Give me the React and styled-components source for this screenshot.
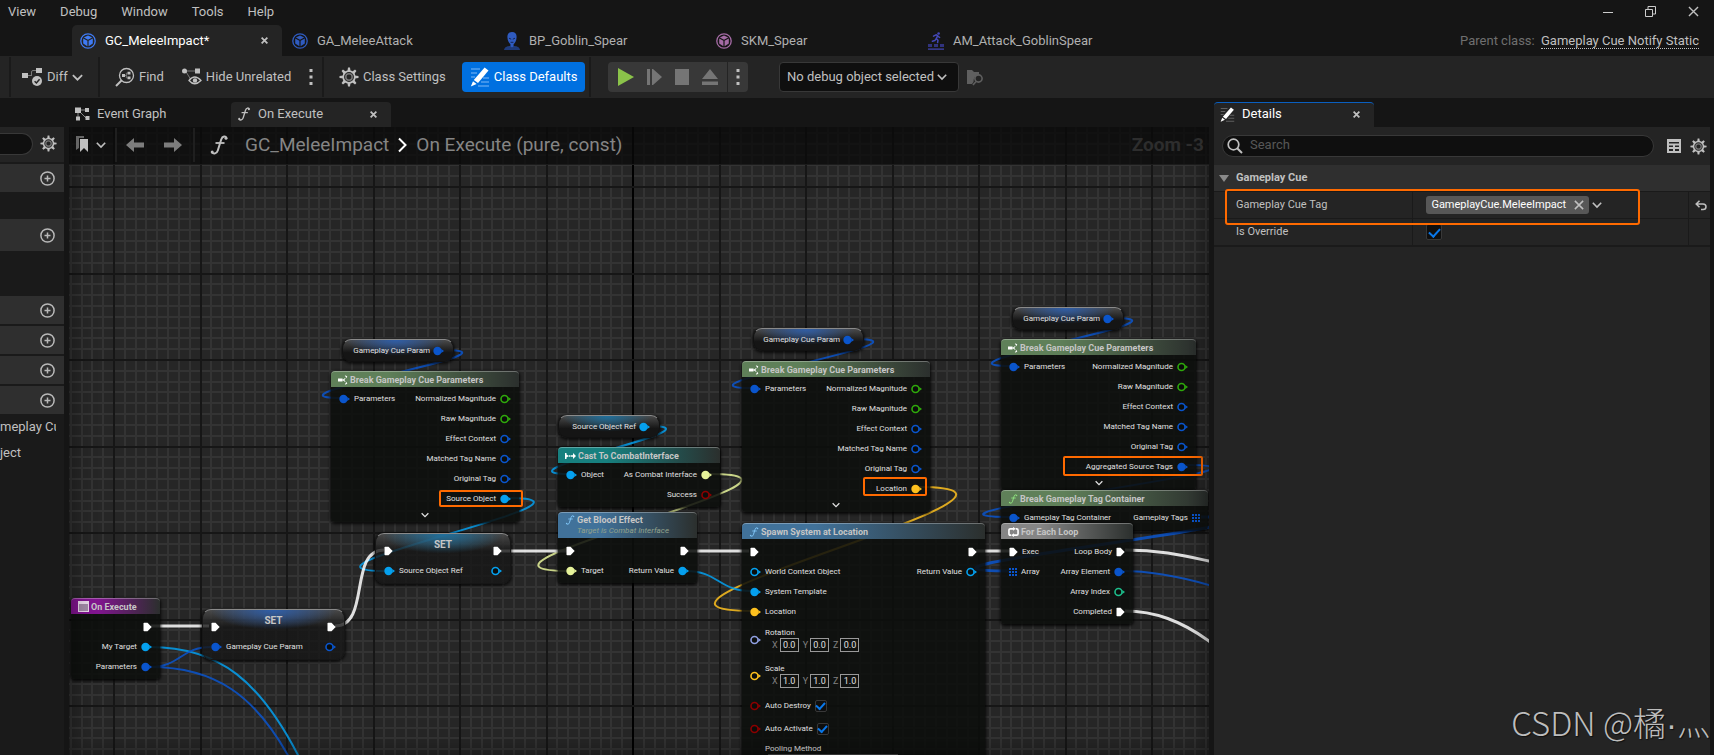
import React from "react";
import styled, { createGlobalStyle } from "styled-components";

const BLUE = "#0a55cc";
const CYAN = "#05a0ee";
const GREEN = "#2fa80c";
const LIME = "#e6f39a";
const RED = "#8c0000";
const GOLD = "#fdc01e";
const TEAL = "#1dbd8b";
const LILAC = "#8f9fe0";

/* ---------- icons ---------- */

const CubeIcon = ({ color }) => (
  <svg width="16" height="16" viewBox="0 0 16 16">
    <circle cx="8" cy="8" r="7.2" fill="none" stroke={color} strokeWidth="1.3" />
    <path d="M8 2.6 12.2 4.6 8 6.8 3.8 4.6z" fill={color} />
    <path d="M3.2 5.5 7.4 7.7V13.2L3.2 10.6zM12.8 5.5 8.6 7.7V13.2L12.8 10.6z" fill={color} />
  </svg>
);

const PawnIcon = () => (
  <svg width="16" height="18" viewBox="0 0 16 18">
    <path d="M0 18c.5-3 3-3.6 5-4h6c2 .4 4.500 1 5 4z" fill="#1f3a78" />
    <path d="M8 0c3.200 0 4.800 2.200 4.600 5.200-.1 3.500-1.800 6-3 7v2L8 15.500 6.400 14.200v-2c-1.200-1-2.900-3.500-3-7C3.200 2.200 4.800 0 8 0z" fill="#2f5bc0" />
    <path d="M5 6.200 7.200 7.200M11 6.200 8.800 7.200M6.600 10.300H9.400" stroke="#16264f" strokeWidth="1" />
  </svg>
);

const MontageIcon = () => (
  <svg width="16" height="18" viewBox="0 0 16 18">
    <g fill="none" stroke="#4448b8" strokeWidth="1.500" strokeLinecap="round" strokeLinejoin="round">
      <path d="M5.500 4.200 8 2.800 9.800 3.600 8.200 6.600 10 8.200 9.600 10.600M8.200 6.600 6.800 8.600 4.400 9.200M9.600 4.200 11.600 5.400" />
    </g>
    <circle cx="10.600" cy="1.500" r="1.300" fill="#4448b8" />
    <path d="M0 12h4v3H0zM6 12h4v3H6zM12 12h4v3h-4z" fill="#31337e" />
    <path d="M0 16.500h16v1.200H0z" fill="#4448b8" />
  </svg>
);

const DiffIcon = () => (
  <svg width="21" height="20" viewBox="0 0 21 20">
    <path d="M6 8.500h4M9.500 8.500V5q0-1.500 1.500-1.500h3" fill="none" stroke="#777" />
    <path d="M0 6h6v5H0zM14 1h6v5h-6z" fill="#c0c0c0" />
    <circle cx="15" cy="14" r="5" fill="#c0c0c0" />
    <path d="m12.600 14.200 1.800 1.800 3.200-3.800" fill="none" stroke="#242424" strokeWidth="1.500" />
  </svg>
);

const FindIcon = () => (
  <svg width="20" height="20" viewBox="0 0 20 20">
    <circle cx="11.500" cy="8.500" r="7" fill="none" stroke="#c0c0c0" strokeWidth="1.300" />
    <path d="M6.500 13.500 1 19" stroke="#c0c0c0" strokeWidth="2" />
    <path d="M7 7h3v3H7zM12.500 4.800h3v2.700h-3zM12.500 9.500h3v2.700h-3z" fill="#c0c0c0" />
    <path d="M10 8.500h1.300M12.500 6.200h-1.200v4.600h1.200" fill="none" stroke="#888" strokeWidth=".8" />
  </svg>
);

const HideIcon = () => (
  <svg width="20" height="18" viewBox="0 0 20 18">
    <path d="M3 3h12M3.500 3l5 8" stroke="#777" />
    <circle cx="2.500" cy="3" r="2.500" fill="#c0c0c0" />
    <path d="M13 .5h5v5h-5z" fill="#c0c0c0" />
    <path d="M7 12.500q5.500-7 12 0-6.500 6.500-12 0z" fill="none" stroke="#c0c0c0" strokeWidth="1.300" />
    <circle cx="13" cy="12.500" r="2.200" fill="#c0c0c0" />
  </svg>
);

const GearIcon = ({ size }) => (
  <svg width={size} height={size} viewBox="0 0 20 20">
    {[0, 45, 90, 135, 180, 225, 270, 315].map((a) => (
      <path key={a} d="M8.400 4.500 9 .5h2l.6 4z" fill="#c0c0c0" transform={`rotate(${a} 10 10)`} />
    ))}
    <circle cx="10" cy="10" r="5.800" fill="none" stroke="#c0c0c0" strokeWidth="1.700" />
    <circle cx="10" cy="10" r="3.200" fill="none" stroke="#777" strokeWidth="1.500" />
  </svg>
);

const PencilIcon = ({ size, line }) => (
  <svg width={size} height={size} viewBox="0 0 20 20">
    <path d="M1 2h9M1 6h6M1 10h4M13 11h6M11 15h8M8 19h11" stroke={line} strokeWidth="1.200" />
    <path d="M14.600 .5 18.500 3.500 8 16 3.800 13z" fill="#fff" />
    <path d="M3 14.200 6.600 17 .8 19.500z" fill="#fff" />
  </svg>
);

const ChevronDown = ({ size = 10, color = "#c0c0c0" }) => (
  <svg width={size} height={size} viewBox="0 0 10 10">
    <path d="M.8 2.800 5 7 9.200 2.800" fill="none" stroke={color} strokeWidth="1.600" />
  </svg>
);

const CloseIcon = ({ size = 7, width = 2 }) => (
  <svg width={size} height={size} viewBox="0 0 8 8">
    <path d="M.7 .7 7.300 7.300M7.300 .7 .7 7.300" stroke="#c0c0c0" strokeWidth={width} />
  </svg>
);

const Dots = () => (
  <svg width="4" height="18" viewBox="0 0 4 18">
    <path d="M.5 1h3v3h-3zM.5 7.500h3v3h-3zM.5 14h3v3h-3z" fill="#c0c0c0" />
  </svg>
);

const FunctionIcon = ({ size, color = "#c0c0c0" }) => (
  <svg width={size} height={size} viewBox="0 0 18 20">
    <path d="M16.500 3.200C15.800 .8 12.400 .8 11.200 4.500L7.800 15.500C6.800 18.600 3.500 19.500 1.800 17.200" fill="none" stroke={color} strokeWidth="2" />
    <path d="M5.500 8H14.500" stroke={color} strokeWidth="1.800" />
    <circle cx="16" cy="3.200" r="1.500" fill={color} />
    <circle cx="2.200" cy="17" r="1.500" fill={color} />
  </svg>
);

const GraphIcon = () => (
  <svg width="15" height="14" viewBox="0 0 15 14">
    <path d="M4 3h7M3 4v8M4 4l7 7" stroke="#888" />
    <path d="M0 .5h6V6H0zM1 9.500h4v4H1zM10 1h4v4h-4zM10.500 9h4v4h-4z" fill="#c0c0c0" />
  </svg>
);

const BookmarkIcon = () => (
  <svg width="12" height="17" viewBox="0 0 12 17">
    <path d="M0 0h8v2H3v10l-3 2z" fill="#666" />
    <path d="M4 3h8v13l-4-4-4 4z" fill="#c0c0c0" />
  </svg>
);

const ArrowIcon = ({ flip }) => (
  <svg width="18" height="14" viewBox="0 0 18 14">
    <path d="M8 0v4.500h10v5H8V14L0 7z" fill="#7d7d7d" transform={flip ? "rotate(180 9 7)" : undefined} />
  </svg>
);

const PlusIcon = () => (
  <svg width="15" height="15" viewBox="0 0 15 15">
    <circle cx="7.500" cy="7.500" r="6.600" fill="none" stroke="#b8b8b8" strokeWidth="1.500" />
    <path d="M7.500 4.500v6M4.500 7.500h6" stroke="#b8b8b8" strokeWidth="1.500" />
  </svg>
);

const SearchIcon = () => (
  <svg width="16" height="16" viewBox="0 0 16 16">
    <circle cx="6.500" cy="6.500" r="5.300" fill="none" stroke="#c0c0c0" strokeWidth="1.700" />
    <path d="M10.200 10.200 15 15" stroke="#c0c0c0" strokeWidth="2" />
  </svg>
);

const TableIcon = () => (
  <svg width="14" height="14" viewBox="0 0 14 14">
    <path d="M0 0h14v14H0z" fill="#c0c0c0" />
    <path d="M2 3h10v1.500H2zM2 6.500h4v1.500H2zM8 6.500h4v1.500H8zM2 10h4v2H2zM8 10h4v2H8z" fill="#242424" />
  </svg>
);

const ResetIcon = () => (
  <svg width="12" height="11" viewBox="0 0 12 11">
    <path d="M4.500 .8 1.200 4 4.500 7.200M1.500 4h6.500q3 0 3 2.800T8 9.600H6" fill="none" stroke="#c0c0c0" strokeWidth="1.500" />
  </svg>
);

const BrowseIcon = () => (
  <svg width="17" height="17" viewBox="0 0 17 17">
    <path d="M0 1h5l2 2h5v3Q6 7 6.500 13L5 15H0z" fill="#5f5f5f" />
    <circle cx="11.500" cy="9.500" r="3.600" fill="none" stroke="#5f5f5f" strokeWidth="1.600" />
    <path d="M9 12.500 6 16" stroke="#5f5f5f" strokeWidth="1.600" />
  </svg>
);

const BreakIcon = () => (
  <svg width="10" height="10" viewBox="0 0 10 10">
    <path d="M0 3.500h4.500v3H0z" fill="#fff" />
    <path d="M4.500 5Q7 5 7 3.200M4.500 5Q7 5 7 6.800" fill="none" stroke="#fff" />
    <path d="M6.800 .3l2.500 1-1 2zM6.800 9.700l2.500-1-1-2z" fill="#fff" />
  </svg>
);

const CastIcon = () => (
  <svg width="11" height="8" viewBox="0 0 11 8">
    <path d="M0 1h1.500v6H0zM1.500 2.500 4 4 1.500 5.500zM4 3.300h1.500v1.400H4zM6 3.300h2V1l3 3-3 3V4.700H6z" fill="#fff" />
  </svg>
);

const LoopIcon = () => (
  <svg width="11" height="10" viewBox="0 0 12 11">
    <path d="M3.500 9H2.500Q1 9 1 7.500V3.500Q1 2 2.500 2h3M8.500 2h1Q11 2 11 3.500v4Q11 9 9.500 9h-3" fill="none" stroke="#fff" strokeWidth="1.800" />
    <path d="M5.500 0 8.500 2 5.500 4.200zM6.500 6.800 3.500 9l3 2z" fill="#fff" />
  </svg>
);

const EventIcon = () => (
  <svg width="11" height="11" viewBox="0 0 11 11">
    <path d="M0 0h11v11H0z" fill="#e8d8ea" />
    <path d="M1 3h9v7H1z" fill="#a089a6" />
  </svg>
);

const DataPin = ({ color, hollow }) => (
  <PinSvg width="11" height="10" viewBox="0 0 11 10">
    <circle cx="4.500" cy="5" r={hollow ? 3.500 : 4.200} fill={hollow ? "#0b0d0b" : color} stroke={color} strokeWidth={hollow ? 1.600 : 0} />
    <path d="M8.300 3 11 5 8.300 7z" fill={color} />
  </PinSvg>
);

const ExecPin = () => (
  <PinSvg width="9" height="10" viewBox="0 0 9 10">
    <path d="M1.200 .8H4.500L8.700 5 4.500 9.200H1.200Q.5 9.200 .5 8.500V1.500Q.5 .8 1.200 .8z" fill="#fff" />
  </PinSvg>
);

const ArrayPin = () => (
  <PinSvg width="8" height="8" viewBox="0 0 8 8">
    {[0, 3, 6].map((x) => [0, 3, 6].map((y) => <path key={`${x}-${y}`} d={`M${x} ${y}h2v2h-2z`} fill={BLUE} />))}
  </PinSvg>
);

/* ---------- graph ---------- */

// Distance between two heavy grid lines is 86.5 at this zoom, with 8 cells in it.
const STEP = 86.5;
const lines = (origin, from, to) => {
  const out = [];
  for (let k = from * 8; k <= to * 8; k++) {
    out.push({ at: Math.round(origin + (k * STEP) / 8), major: k % 8 === 0 });
  }
  return out;
};
const columns = lines(563, -7, 32);
const rows = lines(59, -1, 20);

const Grid = () => (
  <Layer shapeRendering="crispEdges">
    {columns.filter((l) => !l.major).map((l) => <rect key={l.at} x={l.at} y="0" width="2" height="100%" fill="#333" />)}
    {rows.filter((l) => !l.major).map((l) => <rect key={l.at} x="0" y={l.at} width="100%" height="2" fill="#333" />)}
    {columns.filter((l) => l.major).map((l) => <rect key={l.at} x={l.at} y="0" width="2" height="100%" fill={l.at === 563 ? "#000" : "#161616"} />)}
    {rows.filter((l) => l.major).map((l) => <rect key={l.at} x="0" y={l.at} width="100%" height="2" fill="#161616" />)}
  </Layer>
);

const spline = (x1, y1, x2, y2, d) => `M${x1} ${y1}C${x1 + d} ${y1} ${x2 - d} ${y2} ${x2} ${y2}`;

const wires = [
  { d: spline(373, 223, 274, 271, 98), color: BLUE },
  { d: spline(439, 371, 317, 444, 124), color: CYAN },
  { d: spline(579, 299, 501, 347, 85), color: CYAN },
  { d: spline(641, 347, 501, 444, 150), color: LIME },
  { d: spline(849, 360, 684, 484, 180), color: GOLD },
  { d: spline(784, 212, 684, 261, 98), color: BLUE },
  { d: spline(1043, 191, 943, 239, 98), color: BLUE },
  { d: spline(1115, 338, 943, 390, 146), color: BLUE },
  { d: spline(1132, 390, 940, 444, 167), color: BLUE, w: 3 },
  { d: spline(617, 444, 682, 464, 32), color: CYAN },
  { d: "M81 520C151 520 192 555 231 632", color: CYAN },
  { d: "M81 540C146 540 186 568 221 632", color: BLUE },
  { d: spline(81, 540, 142, 520, 30), color: BLUE },
  { d: "M1053 444C1085 444 1112 450 1140 458L1240 490", color: BLUE },
  { d: "M82 499H140", color: "#fff", w: 3 },
  { d: spline(266, 499, 315, 423, 36), color: "#fff", w: 3 },
  { d: "M432 424H498", color: "#fff", w: 3 },
  { d: "M619 424H680", color: "#fff", w: 3 },
  { d: "M907 424H941", color: "#fff", w: 3 },
  { d: "M1056 423C1090 423 1112 428 1140 434L1240 460", color: "#fff", w: 3 },
  { d: "M1056 484C1086 484 1112 494 1140 514L1240 600", color: "#fff", w: 3 },
];

const Wires = () => (
  <Layer>
    {wires.map((w) => <path key={w.d} d={w.d} fill="none" stroke={w.color} strokeWidth={w.w || 2} opacity=".85" />)}
  </Layer>
);

const Pin = ({ pin }) => {
  if (pin === "exec") return <ExecPin />;
  if (pin === "array") return <ArrayPin />;
  return <DataPin color={pin[0]} hollow={pin[1]} />;
};

const PinRow = ({ left, right, exec }) => (
  <Row $exec={exec}>
    <Side>
      {left && <Pin pin={left[0]} />}
      {left && left[1]}
    </Side>
    <Side>
      {right && right[1]}
      {right && <Pin pin={right[0]} />}
    </Side>
  </Row>
);

const breakPins = [
  ["Normalized Magnitude", GREEN],
  ["Raw Magnitude", GREEN],
  ["Effect Context", BLUE],
  ["Matched Tag Name", BLUE],
  ["Original Tag", BLUE],
];

const BreakNode = ({ x, y, w, last, color }) => (
  <Node $x={x} $y={y} $w={w}>
    <Head $color="#5f8059"><BreakIcon />Break Gameplay Cue Parameters</Head>
    {breakPins.map(([name, c], i) => (
      <PinRow key={name} left={i === 0 ? [[BLUE], "Parameters"] : null} right={[[c, true], name]} />
    ))}
    <PinRow right={[[color], last]} />
    <Expand aria-label="Show more pins"><ChevronDown size={8} color="#e0e0e0" /></Expand>
  </Node>
);

const VariableNode = ({ x, y, w, name, color, glow }) => (
  <Variable $x={x} $y={y} $w={w} $glow={glow}>
    {name}
    <DataPin color={color} />
  </Variable>
);

const SetNode = ({ x, y, w, name, color, glow }) => (
  <SetBox $x={x} $y={y} $w={w} $glow={glow}>
    <SetTop><ExecPin /><strong>SET</strong><ExecPin /></SetTop>
    <PinRow left={[[color], name]} right={[[color, true], ""]} />
  </SetBox>
);

const VectorPin = ({ name, color, value }) => (
  <VectorRow>
    <DataPin color={color} hollow />
    <div>
      <p>{name}</p>
      <Fields>
        {["X", "Y", "Z"].map((axis) => (
          <label key={axis}>{axis}<input defaultValue={value} /></label>
        ))}
      </Fields>
    </div>
  </VectorRow>
);

const Graph = () => (
  <Canvas>
    <Grid />
    <Wires />

    <VariableNode x={273} y={212} w={112} name="Gameplay Cue Param" color={BLUE} glow="#2f5ea8" />
    <BreakNode x={262} y={244} w={188} last="Source Object" color={CYAN} />

    <VariableNode x={489} y={288} w={102} name="Source Object Ref" color={CYAN} glow="#1f6f9c" />
    <Node $x={489} $y={320} $w={162}>
      <Head $color="#17807f"><CastIcon />Cast To CombatInterface</Head>
      <PinRow left={[[CYAN], "Object"]} right={[[LIME], "As Combat Interface"]} />
      <PinRow right={[[RED, true], "Success"]} />
    </Node>
    <Node $x={489} $y={385} $w={139}>
      <Head $color="#41729a" $tall>
        <FunctionIcon size={10} color="#7fc4f5" />
        <div>
          Get Blood Effect
          <em>Target is Combat Interface</em>
        </div>
      </Head>
      <PinRow exec left={["exec", ""]} right={["exec", ""]} />
      <PinRow left={[[LIME], "Target"]} right={[[CYAN], "Return Value"]} />
    </Node>

    <SetNode x={306} y={406} w={136} name="Source Object Ref" color={CYAN} glow="#1f6f9c" />
    <SetNode x={133} y={482} w={143} name="Gameplay Cue Param" color={BLUE} glow="#2f5ea8" />

    <Node $x={2} $y={471} $w={89}>
      <Head $color="#81158f"><EventIcon />On Execute</Head>
      <PinRow exec right={["exec", ""]} />
      <PinRow right={[[CYAN], "My Target"]} />
      <PinRow right={[[BLUE], "Parameters"]} />
    </Node>

    <VariableNode x={684} y={201} w={111} name="Gameplay Cue Param" color={BLUE} glow="#2f5ea8" />
    <BreakNode x={673} y={234} w={188} last="Location" color={GOLD} />
    <Node $x={673} $y={396} $w={243}>
      <Head $color="#41729a"><FunctionIcon size={10} color="#7fc4f5" />Spawn System at Location</Head>
      <PinRow exec left={["exec", ""]} right={["exec", ""]} />
      <PinRow left={[[CYAN, true], "World Context Object"]} right={[[CYAN, true], "Return Value"]} />
      <PinRow left={[[CYAN], "System Template"]} />
      <PinRow left={[[GOLD], "Location"]} />
      <VectorPin name="Rotation" color={LILAC} value="0.0" />
      <VectorPin name="Scale" color={GOLD} value="1.0" />
      <CheckRow><DataPin color={RED} hollow />Auto Destroy<Checkbox $small defaultChecked /></CheckRow>
      <CheckRow><DataPin color={RED} hollow />Auto Activate<Checkbox $small defaultChecked /></CheckRow>
      <Pooling>
        <label htmlFor="pooling">Pooling Method</label>
        <select id="pooling" defaultValue="None"><option>None</option></select>
      </Pooling>
    </Node>

    <VariableNode x={943} y={180} w={112} name="Gameplay Cue Param" color={BLUE} glow="#2f5ea8" />
    <BreakNode x={932} y={212} w={195} last="Aggregated Source Tags" color={BLUE} />
    <Node $x={932} $y={363} $w={207}>
      <Head $color="#5f8059"><FunctionIcon size={10} color="#8ee07f" />Break Gameplay Tag Container</Head>
      <PinRow left={[[BLUE], "Gameplay Tag Container"]} right={["array", "Gameplay Tags"]} />
    </Node>
    <Node $x={932} $y={396} $w={132}>
      <Head $color="#858585"><LoopIcon />For Each Loop</Head>
      <PinRow exec left={["exec", "Exec"]} right={["exec", "Loop Body"]} />
      <PinRow left={["array", "Array"]} right={[[BLUE], "Array Element"]} />
      <PinRow right={[[TEAL, true], "Array Index"]} />
      <PinRow right={["exec", "Completed"]} />
    </Node>

    <Mark $x={370} $y={363} $w={84} $h={17} />
    <Mark $x={794} $y={350} $w={64} $h={19} />
    <Mark $x={994} $y={329} $w={140} $h={20} />
    <Vignette />

    <Crumbs>
      <IconButton aria-label="Bookmarks"><BookmarkIcon /><ChevronDown size={10} /></IconButton>
      <Nav>
        <IconButton aria-label="Back"><ArrowIcon /></IconButton>
        <IconButton aria-label="Forward"><ArrowIcon flip /></IconButton>
      </Nav>
      <FunctionIcon size={20} />
      <Path>
        <a href="#class">GC_MeleeImpact</a>
        <svg width="9" height="16" viewBox="0 0 9 16"><path d="M1 1.500 7.500 8 1 14.500" fill="none" stroke="#fff" strokeWidth="2" /></svg>
        <span>On Execute (pure, const)</span>
      </Path>
      <Zoom>Zoom -3</Zoom>
    </Crumbs>
  </Canvas>
);

/* ---------- page ---------- */

const docs = [
  { name: "GC_MeleeImpact*", icon: <CubeIcon color="#3f7bf5" />, active: true },
  { name: "GA_MeleeAttack", icon: <CubeIcon color="#2f5bc0" /> },
  { name: "BP_Goblin_Spear", icon: <PawnIcon /> },
  { name: "SKM_Spear", icon: <CubeIcon color="#a56ba5" /> },
  { name: "AM_Attack_GoblinSpear", icon: <MontageIcon /> },
];

const Details = () => (
  <DetailsPanel>
    <PanelTabs>
      <PanelTab $active $focus>
        <PencilIcon size={15} line="#666" />
        <span>Details</span>
        <TabClose aria-label="Close Details"><CloseIcon /></TabClose>
      </PanelTab>
    </PanelTabs>
    <DetailsBody>
      <SearchBar>
        <SearchField>
          <SearchIcon />
          <input aria-label="Search details" placeholder="Search" />
        </SearchField>
        <IconButton aria-label="Table view"><TableIcon /></IconButton>
        <IconButton aria-label="Settings"><GearIcon size={17} /></IconButton>
      </SearchBar>
      <Category>
        <svg width="10" height="7" viewBox="0 0 10 7"><path d="M0 0h10L5 7z" fill="#8a8a8a" /></svg>
        Gameplay Cue
      </Category>
      <Property>
        <div>Gameplay Cue Tag</div>
        <div>
          <Chip>GameplayCue.MeleeImpact<IconButton aria-label="Clear tag"><CloseIcon size={10} width={1.200} /></IconButton></Chip>
          <IconButton aria-label="Choose tag"><ChevronDown /></IconButton>
        </div>
        <div><IconButton aria-label="Reset to default"><ResetIcon /></IconButton></div>
        <PropertyMark />
      </Property>
      <Property>
        <label htmlFor="override">Is Override</label>
        <div><Checkbox id="override" defaultChecked /></div>
        <div />
      </Property>
      <Watermark>CSDN @橘<span>·</span>灬</Watermark>
    </DetailsBody>
  </DetailsPanel>
);

const App = () => {
  return (
    <Container>
      <GlobalStyle />
      <MenuBar>
        {["View", "Debug", "Window", "Tools", "Help"].map((m) => <button key={m}>{m}</button>)}
        <WindowButtons>
          <IconButton aria-label="Minimize"><svg width="10" height="11" viewBox="0 0 10 11"><path d="M0 6.500h10" stroke="#ccc" /></svg></IconButton>
          <IconButton aria-label="Restore">
            <svg width="11" height="11" viewBox="0 0 11 11"><path d="M.5 3.500h7v7h-7zM3 3V.5h7.500V8H8" fill="none" stroke="#ccc" /></svg>
          </IconButton>
          <IconButton aria-label="Close"><CloseIcon size={11} width={1} /></IconButton>
        </WindowButtons>
      </MenuBar>
      <DocTabs>
        {docs.map((d) => (
          <DocTab key={d.name} $active={d.active}>
            {d.icon}
            <span>{d.name}</span>
            {d.active && <TabClose aria-label="Close tab"><CloseIcon /></TabClose>}
          </DocTab>
        ))}
        <Parent>Parent class: <a href="#parent">Gameplay Cue Notify Static</a></Parent>
      </DocTabs>

      <Toolbar>
        <Group $w={89} $pad={11} $gap={16}><Tool><DiffIcon />Diff<ChevronDown size={11} /></Tool></Group>
        <Group $w={224} $pad={15} $gap={18}>
          <Tool><FindIcon />Find</Tool>
          <Tool><HideIcon />Hide Unrelated</Tool>
          <IconButton aria-label="More"><Dots /></IconButton>
        </Group>
        <Group $w={267} $pad={15} $gap={16}>
          <Tool><GearIcon size={20} />Class Settings</Tool>
          <Tool $primary><PencilIcon size={20} line="#7fb8f5" />Class Defaults</Tool>
        </Group>
        <Group $w={173} $pad={17} $gap={16}>
          <Play>
            <IconButton aria-label="Play"><svg width="16" height="18"><path d="M0 0 16 9 0 18z" fill="#8bc34a" /></svg></IconButton>
            <IconButton aria-label="Step"><svg width="15" height="16"><path d="M0 0h3v16H0zM5 0h1v16H5zM6 0l9 8-9 8z" fill="#757575" /></svg></IconButton>
            <IconButton aria-label="Stop"><svg width="14" height="16"><path d="M0 0h14v16H0z" fill="#757575" /></svg></IconButton>
            <IconButton aria-label="Eject"><svg width="16" height="16"><path d="M8 0 16 10H0zM0 12.500h16V16H0z" fill="#757575" /></svg></IconButton>
            <IconButton aria-label="Play options"><Dots /></IconButton>
          </Play>
        </Group>
        <DebugSelect>
          <select aria-label="Debug object"><option>No debug object selected</option></select>
          <ChevronDown />
        </DebugSelect>
        <IconButton aria-label="Browse"><BrowseIcon /></IconButton>
      </Toolbar>

      <Main>
        <Sidebar>
          <SideSearch>
            <input aria-label="Search members" />
            <IconButton aria-label="Settings"><GearIcon size={17} /></IconButton>
          </SideSearch>
          {[[28, 27], [32, 45], [28, 2], [28, 2], [28, 2], [28, 0]].map(([h, after], i) => (
            <Section key={i} $h={h} $after={after}><IconButton aria-label="Add"><PlusIcon /></IconButton></Section>
          ))}
          <Member>meplay Cu</Member>
          <Member>ject</Member>
        </Sidebar>
        <GraphPanel>
          <PanelTabs>
            <PanelTab><GraphIcon /><span>Event Graph</span></PanelTab>
            <PanelTab $active>
              <FunctionIcon size={14} />
              <span>On Execute</span>
              <TabClose aria-label="Close On Execute"><CloseIcon /></TabClose>
            </PanelTab>
          </PanelTabs>
          <Graph />
        </GraphPanel>
        <Details />
      </Main>
    </Container>
  );
};

export default App;

const GlobalStyle = createGlobalStyle`
  * {
    box-sizing: border-box;
  }
  body {
    margin: 0;
    background-color: #151515;
  }
  button, input, select {
    font: inherit;
    color: inherit;
  }
  button {
    cursor: pointer;
  }
  svg {
    flex-shrink: 0;
  }
`;

const Container = styled.div`
  height: 100vh;
  display: flex;
  flex-direction: column;
  overflow: hidden;
  background-color: #151515;
  color: #c0c0c0;
  font-family: Roboto, "Liberation Sans", sans-serif;
  font-size: 13px;
  line-height: 16px;
`;

const IconButton = styled.button`
  display: flex;
  align-items: center;
  padding: 0;
  border: none;
  background: none;
`;

const MenuBar = styled.div`
  display: flex;
  align-items: center;
  gap: 24px;
  height: 25px;
  padding: 0 15px 2px 8px;
  > button {
    padding: 0;
    border: none;
    background: none;
  }
`;

const WindowButtons = styled.div`
  display: flex;
  gap: 32px;
  margin-left: auto;
`;

const DocTabs = styled.div`
  display: flex;
  height: 31px;
  padding: 0 15px 0 72px;
`;

const DocTab = styled.div`
  display: flex;
  align-items: center;
  gap: 9px;
  width: 210px;
  margin-right: 2px;
  padding: 0 14px 0 8px;
  border-radius: 5px 5px 0 0;
  background-color: ${(p) => (p.$active ? "#242424" : "transparent")};
  color: ${(p) => (p.$active ? "#fff" : "#b0b0b0")};
`;

const TabClose = styled(IconButton)`
  margin-left: auto;
`;

const Parent = styled.div`
  margin: auto 0 auto auto;
  color: #6f6f6f;
  a {
    margin-left: 3px;
    color: #c0c0c0;
    text-decoration: none;
    border-bottom: 1px dotted #c0c0c0;
  }
`;

const Toolbar = styled.div`
  display: flex;
  align-items: center;
  height: 42px;
  padding-left: 9px;
  background-color: #242424;
`;

const Group = styled.div`
  display: flex;
  align-items: center;
  gap: ${(p) => p.$gap}px;
  width: ${(p) => p.$w}px;
  height: 40px;
  padding-left: ${(p) => p.$pad}px;
  border-left: 2px solid #1a1a1a;
`;

const Tool = styled.button`
  display: flex;
  align-items: center;
  gap: 4px;
  height: 30px;
  padding: ${(p) => (p.$primary ? "0 8px" : "0")};
  border: none;
  border-radius: 4px;
  white-space: nowrap;
  color: ${(p) => (p.$primary ? "#fff" : "#c0c0c0")};
  background-color: ${(p) => (p.$primary ? "#0070e0" : "transparent")};
`;

const Play = styled.div`
  display: flex;
  align-items: center;
  gap: 13px;
  height: 30px;
  padding-left: 10px;
  border-radius: 4px;
  background-color: #383838;
  button:last-child {
    height: 30px;
    margin-left: -4px;
    padding: 0 8px;
    border-left: 1px solid #242424;
  }
`;

const DebugSelect = styled.div`
  display: flex;
  align-items: center;
  height: 30px;
  margin: 0 8px 0 17px;
  padding: 0 11px 0 7px;
  border: 1px solid #383838;
  border-radius: 4px;
  background-color: #0f0f0f;
  select {
    padding: 0 2px 0 0;
    appearance: none;
    border: none;
    background: none;
  }
`;

const Main = styled.div`
  display: flex;
  flex: 1;
  gap: 5px;
  min-height: 0;
  padding-right: 4px;
`;

const Sidebar = styled.div`
  width: 64px;
  margin-top: 29px;
  background-color: #1a1a1a;
`;

const SideSearch = styled.div`
  display: flex;
  align-items: center;
  gap: 7px;
  height: 35px;
  margin-bottom: 2px;
  padding-bottom: 2px;
  background-color: #242424;
  input {
    width: 33px;
    height: 22px;
    border: 1px solid #383838;
    border-left: none;
    border-radius: 0 11px 11px 0;
    background-color: #0f0f0f;
  }
`;

const Section = styled.div`
  display: flex;
  align-items: center;
  justify-content: flex-end;
  height: ${(p) => p.$h}px;
  margin-bottom: ${(p) => p.$after}px;
  padding-right: 9px;
  background-color: #2f2f2f;
`;

const Member = styled.div`
  width: 56px;
  overflow: hidden;
  white-space: nowrap;
  line-height: 26px;
`;

const GraphPanel = styled.div`
  display: flex;
  flex-direction: column;
  flex: 1140 1 0;
  min-width: 0;
`;

const PanelTabs = styled.div`
  display: flex;
  height: 29px;
  padding-top: 4px;
`;

const PanelTab = styled.div`
  display: flex;
  align-items: center;
  gap: 7px;
  width: 160px;
  margin-right: 2px;
  padding: 0 14px 2px 6px;
  border-radius: 4px 4px 0 0;
  border-top: 1px solid ${(p) => (p.$focus ? "#0a5fc0" : "transparent")};
  color: ${(p) => (p.$focus ? "#fff" : "#c0c0c0")};
  background-color: ${(p) => (p.$active ? "#242424" : "transparent")};
`;

const Canvas = styled.div`
  position: relative;
  flex: 1;
  overflow: hidden;
  background-color: #262626;
  color: #e0e0e0;
  font-size: 8px;
  line-height: 10px;
`;

const Layer = styled.svg`
  position: absolute;
  top: 0;
  left: 0;
  width: 100%;
  height: 100%;
`;

const Vignette = styled.div`
  position: absolute;
  inset: 0;
  pointer-events: none;
  box-shadow: inset 0 0 24px rgba(0, 0, 0, 0.5);
`;

const Crumbs = styled.div`
  position: relative;
  display: flex;
  align-items: center;
  height: 38px;
  padding: 0 5px 2px 7px;
  border-bottom: 1px solid #1c1c1c;
  background-color: rgba(10, 10, 10, 0.75);
  > button {
    gap: 8px;
  }
`;

const Nav = styled.div`
  display: flex;
  align-items: center;
  gap: 20px;
  height: 34px;
  margin: 0 14px 0 9px;
  padding: 0 11px 0 9px;
  border: solid #1f1f1f;
  border-width: 0 2px;
`;

const Path = styled.div`
  display: flex;
  align-items: center;
  gap: 9px;
  margin-left: 16px;
  font-size: 19px;
  line-height: 24px;
  color: #858585;
  a {
    color: inherit;
    text-decoration: none;
  }
`;

const Zoom = styled.div`
  margin-left: auto;
  font-size: 19px;
  font-weight: 700;
  color: #2d2d2d;
`;

const PinSvg = styled.svg`
  display: block;
`;

const Placed = styled.div`
  position: absolute;
  left: ${(p) => p.$x}px;
  top: ${(p) => p.$y}px;
  width: ${(p) => p.$w}px;
`;

const Node = styled(Placed)`
  padding-bottom: 2px;
  border-radius: 4px;
  background-color: rgba(12, 15, 12, 0.88);
  box-shadow: 0 1px 3px 1px rgba(0, 0, 0, 0.8);
`;

const Head = styled.div`
  display: flex;
  align-items: ${(p) => (p.$tall ? "flex-start" : "center")};
  gap: 2px;
  height: ${(p) => (p.$tall ? 26 : 16)}px;
  margin-bottom: 2px;
  padding: ${(p) => (p.$tall ? "2px 7px 0" : "0 7px")};
  border-top: 1px solid rgba(255, 255, 255, 0.3);
  border-radius: 4px 4px 0 0;
  background-image: linear-gradient(90deg, ${(p) => p.$color}, ${(p) => p.$color} 30%, #2b2f2d);
  color: #c6c6c6;
  font-size: 9px;
  font-weight: 700;
  white-space: nowrap;
  em {
    display: block;
    margin-top: 1px;
    font-size: 8px;
    font-weight: 400;
    color: #93a28c;
  }
`;

const Row = styled.div`
  display: flex;
  align-items: center;
  justify-content: space-between;
  height: ${(p) => (p.$exec ? 21 : 20)}px;
  padding: 0 8px;
`;

const Side = styled.div`
  display: flex;
  align-items: center;
  gap: 4px;
  white-space: nowrap;
`;

const Expand = styled(IconButton)`
  justify-content: center;
  width: 100%;
  height: 11px;
`;

const Variable = styled(Placed)`
  display: flex;
  align-items: center;
  justify-content: flex-end;
  gap: 3px;
  height: 23px;
  padding-right: 9px;
  border: 1px solid #111;
  border-top-color: #8a8a8a;
  border-radius: 9px;
  background: radial-gradient(ellipse 45% 75% at 48% 0, ${(p) => p.$glow}, transparent),
    linear-gradient(#4a4a4a, #151515 60%);
  box-shadow: 0 1px 3px 1px rgba(0, 0, 0, 0.7);
  white-space: nowrap;
`;

const SetBox = styled(Placed)`
  padding: 6px 0 2px;
  border: 1px solid #161616;
  border-top-color: #8a8a8a;
  border-radius: 9px;
  background: radial-gradient(ellipse 45% 40% at 50% 0, ${(p) => p.$glow}, transparent),
    linear-gradient(rgba(80, 80, 80, 0.8), rgba(22, 22, 22, 0.8) 35%);
  box-shadow: 0 1px 3px 1px rgba(0, 0, 0, 0.7);
`;

const SetTop = styled.div`
  display: flex;
  align-items: center;
  justify-content: space-between;
  height: 21px;
  padding: 0 8px;
  strong {
    align-self: flex-start;
    font-size: 10px;
    color: #c6c6c6;
  }
`;

const VectorRow = styled.div`
  display: flex;
  align-items: center;
  gap: 4px;
  height: 36px;
  padding-left: 8px;
  p {
    margin: 0;
  }
`;

const Fields = styled.div`
  display: flex;
  gap: 4px;
  padding-left: 7px;
  font-size: 9px;
  color: #808080;
  label {
    display: flex;
    align-items: center;
    gap: 2px;
  }
  input {
    width: 19px;
    height: 14px;
    padding: 0;
    border: 1px solid #999;
    background: none;
    text-align: center;
    color: #e0e0e0;
  }
`;

const CheckRow = styled.label`
  display: flex;
  align-items: center;
  gap: 4px;
  height: 23px;
  padding-left: 8px;
`;

const Checkbox = styled.input.attrs({ type: "checkbox" })`
  display: grid;
  place-items: center;
  appearance: none;
  width: ${(p) => (p.$small ? 12 : 16)}px;
  height: ${(p) => (p.$small ? 12 : 16)}px;
  margin: 0;
  border: 1px solid #383838;
  border-radius: 2px;
  background-color: #0f0f0f;
  &:checked::after {
    content: "";
    width: ${(p) => (p.$small ? 7 : 9)}px;
    height: ${(p) => (p.$small ? 4 : 5)}px;
    border: solid #0a78ea;
    border-width: 0 0 2px 2px;
    transform: translateY(-1px) rotate(-48deg);
  }
`;

const Pooling = styled.div`
  display: flex;
  flex-direction: column;
  align-items: flex-start;
  padding: 4px 0 0 23px;
  select {
    width: 130px;
    height: 16px;
    margin-left: 3px;
    border: 1px solid #444;
    background-color: #0f0f0f;
  }
`;

const Mark = styled(Placed)`
  height: ${(p) => p.$h}px;
  border: 2px solid #ff6a00;
  border-radius: 2px;
`;

const DetailsPanel = styled.div`
  display: flex;
  flex-direction: column;
  flex: 496 1 0;
  min-width: 0;
`;

const DetailsBody = styled.div`
  position: relative;
  flex: 1;
  background-color: #242424;
  font-size: 11px;
`;

const SearchBar = styled.div`
  display: flex;
  align-items: center;
  gap: 9px;
  height: 38px;
  padding: 0 3px 0 8px;
`;

const SearchField = styled.label`
  display: flex;
  flex: 1;
  align-items: center;
  gap: 7px;
  height: 22px;
  margin: 0 4px 1px 0;
  padding-left: 4px;
  border: 1px solid #383838;
  border-radius: 11px;
  background-color: #0f0f0f;
  font-size: 13px;
  input {
    flex: 1;
    padding: 0 0 2px;
    border: none;
    outline: none;
    background: none;
  }
  input::placeholder {
    color: #575757;
  }
`;

const Category = styled.div`
  display: flex;
  align-items: center;
  gap: 7px;
  height: 26px;
  padding-left: 5px;
  background-color: #2f2f2f;
  font-weight: 700;
`;

const Property = styled.div`
  position: relative;
  display: grid;
  grid-template-columns: 40% 1fr 22px;
  height: 27px;
  border: solid #1a1a1a;
  border-width: 1px 0 0;
  &:nth-of-type(4) {
    border-bottom-width: 2px;
    height: 29px;
  }
  > * {
    display: flex;
    align-items: center;
    gap: 3px;
    padding-left: 13px;
    border-left: 1px solid #1a1a1a;
  }
  > :first-child {
    padding-left: 22px;
    border-left: none;
  }
  > :nth-child(3) {
    padding-left: 6px;
  }
`;

const Chip = styled.span`
  display: flex;
  align-items: center;
  gap: 8px;
  height: 18px;
  padding: 0 5px;
  border-radius: 3px;
  background-color: #575757;
  color: #fff;
`;

const PropertyMark = styled.span`
  position: absolute;
  top: -3px;
  left: 11px;
  width: 415px;
  height: 36px;
  z-index: 1;
  border: 2px solid #ff6a00 !important;
  border-radius: 3px;
  pointer-events: none;
`;

const Watermark = styled.div`
  position: absolute;
  right: 0;
  bottom: 6px;
  color: #bdbdbd;
  font-family: "Noto Sans CJK SC", sans-serif;
  font-size: 33px;
  font-weight: 300;
  line-height: 48px;
  text-shadow: 1px 1px 1px rgba(0, 0, 0, 0.6);
  span {
    font-family: "Liberation Sans", sans-serif;
  }
`;
